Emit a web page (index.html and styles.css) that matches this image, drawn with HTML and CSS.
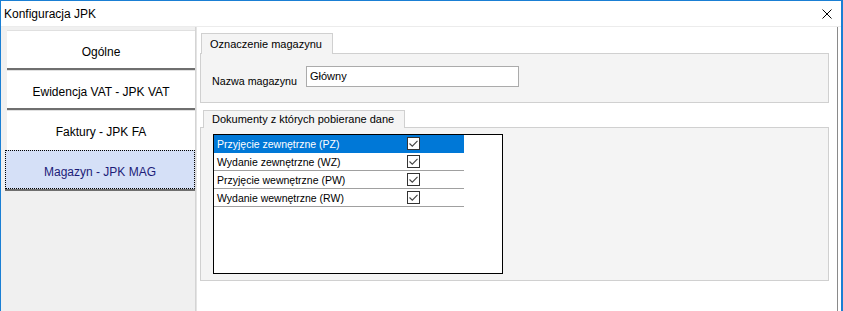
FILE: index.html
```html
<!DOCTYPE html>
<html lang="pl">
<head>
<meta charset="utf-8">
<title>Konfiguracja JPK</title>
<link rel="stylesheet" href="styles.css">
</head>
<body>
<div class="window">
  <div class="titlebar">
    <span class="title">Konfiguracja JPK</span>
    <span class="close">
      <svg width="10" height="10" viewBox="0 0 10 10"><path d="M0.5 0.5 L9.5 9.5 M9.5 0.5 L0.5 9.5" stroke="#000" stroke-width="1" fill="none"/></svg>
    </span>
  </div>
  <div class="content">
    <div class="sidebar">
      <div class="navbtn">Ogólne</div>
      <div class="navbtn">Ewidencja VAT - JPK VAT</div>
      <div class="navbtn flat">Faktury - JPK FA</div>
      <div class="navbtn selected">Magazyn - JPK MAG</div>
    </div>
    <div class="main">
      <div class="group">
        <div class="tab">Oznaczenie magazynu</div>
        <div class="panel panel-name">
          <span class="label">Nazwa magazynu</span>
          <div class="input">Główny</div>
        </div>
      </div>
      <div class="group">
        <div class="tab tab2">Dokumenty z których pobierane dane</div>
        <div class="panel panel-docs">
          <div class="listbox">
            <div class="row active"><span class="txt">Przyjęcie zewnętrzne (PZ)</span><span class="cb"><svg width="11" height="11" viewBox="0 0 11 11"><path d="M1.5 5.5 L4.3 8.2 L9.5 2.8" stroke="#444" stroke-width="1.1" fill="none"/></svg></span></div>
            <div class="row"><span class="txt">Wydanie zewnętrzne (WZ)</span><span class="cb"><svg width="11" height="11" viewBox="0 0 11 11"><path d="M1.5 5.5 L4.3 8.2 L9.5 2.8" stroke="#444" stroke-width="1.1" fill="none"/></svg></span></div>
            <div class="row"><span class="txt">Przyjęcie wewnętrzne (PW)</span><span class="cb"><svg width="11" height="11" viewBox="0 0 11 11"><path d="M1.5 5.5 L4.3 8.2 L9.5 2.8" stroke="#444" stroke-width="1.1" fill="none"/></svg></span></div>
            <div class="row"><span class="txt">Wydanie wewnętrzne (RW)</span><span class="cb"><svg width="11" height="11" viewBox="0 0 11 11"><path d="M1.5 5.5 L4.3 8.2 L9.5 2.8" stroke="#444" stroke-width="1.1" fill="none"/></svg></span></div>
          </div>
        </div>
      </div>
    </div>
  </div>
</div>
</body>
</html>
```
FILE: styles.css
```css
* { box-sizing: border-box; }
html, body { margin: 0; padding: 0; }
body {
  width: 843px;
  height: 311px;
  overflow: hidden;
  background: #ffffff;
  font-family: "Liberation Sans", Arial, sans-serif;
  color: #000;
}
.window {
  width: 843px;
  height: 311px;
  border-top: 1px solid #1a7fd4;
  border-left: 1px solid #1a7fd4;
  border-right: 2px solid #1a7fd4;
  display: flex;
  flex-direction: column;
  background: #fff;
}
.titlebar {
  height: 26px;
  display: flex;
  align-items: center;
  justify-content: space-between;
  padding: 0 9px 0 3px;
  border-bottom: 1px solid #ececec;
  flex: none;
}
.title { font-size: 12px; }
.close { display: flex; width: 10px; height: 10px; }
.content {
  flex: 1;
  display: flex;
  min-height: 0;
}
.sidebar {
  width: 195px;
  flex: none;
  background: #f0f0f0;
  border-right: 1px solid #d4d4d4;
  padding: 3px 0 0 6px;
}
.navbtn {
  height: 40px;
  width: 188px;
  background: #fff;
  border-top: 1px solid #e0e0e0;
  border-bottom: 2px solid #6f6f6f;
  font-size: 12px;
  display: flex;
  align-items: center;
  justify-content: center;
  padding-top: 4px;
}
.navbtn.flat { border-bottom: 2px solid #fff; }
.navbtn.selected {
  margin-left: -2px;
  width: 190px;
  background: #d5e0f7;
  color: #1c1c78;
  border: 1px dotted #000;
  box-shadow: 0 2px 0 #6f6f6f;
  height: 39px;
}
.main {
  flex: 1;
  border-left: 1px solid #e4e4e4;
  border-right: 1px solid #8a8a8a;
  margin-right: 3px;
  padding: 6px 8px 0 3px;
  display: flex;
  flex-direction: column;
  gap: 7px;
}
.group { display: flex; flex-direction: column; }
.tab {
  align-self: flex-start;
  margin-left: 1px;
  height: 21px;
  padding: 4px 10px 0 8px;
  font-size: 11px;
  background: #f4f4f4;
  border: 1px solid #d0d0d0;
  border-bottom: none;
  position: relative;
  z-index: 1;
  margin-bottom: -1px;
}
.tab2 { height: 18px; padding-top: 2px; margin-left: 3px; }
.panel {
  background: #f4f4f4;
  border: 1px solid #d0d0d0;
}
.panel-name {
  height: 50px;
  display: flex;
  align-items: flex-start;
  padding: 12px 0 0 11px;
}
.label { font-size: 10.7px; margin-top: 9px; width: 94px; }
.input {
  width: 213px;
  height: 21px;
  background: #fff;
  border: 1px solid #ababab;
  font-size: 11px;
  padding: 3px 0 0 3px;
}
.panel-docs {
  height: 154px;
  padding: 6px 0 0 12px;
}
.listbox {
  width: 290px;
  height: 140px;
  background: #fff;
  border: 1px solid #000;
}
.row {
  width: 250px;
  height: 18px;
  display: flex;
  align-items: center;
  border-bottom: 1px solid #a0a0a0;
  font-size: 10.5px;
  padding-left: 3px;
  position: relative;
}
.row.active { background: #0078d7; color: #fff; border-bottom-color: #0078d7; }
.txt { flex: 1; }
.cb {
  position: absolute;
  left: 193px;
  top: 2px;
  width: 13px;
  height: 13px;
  border: 1px solid #333;
  background: #fff;
  display: flex;
}
```
